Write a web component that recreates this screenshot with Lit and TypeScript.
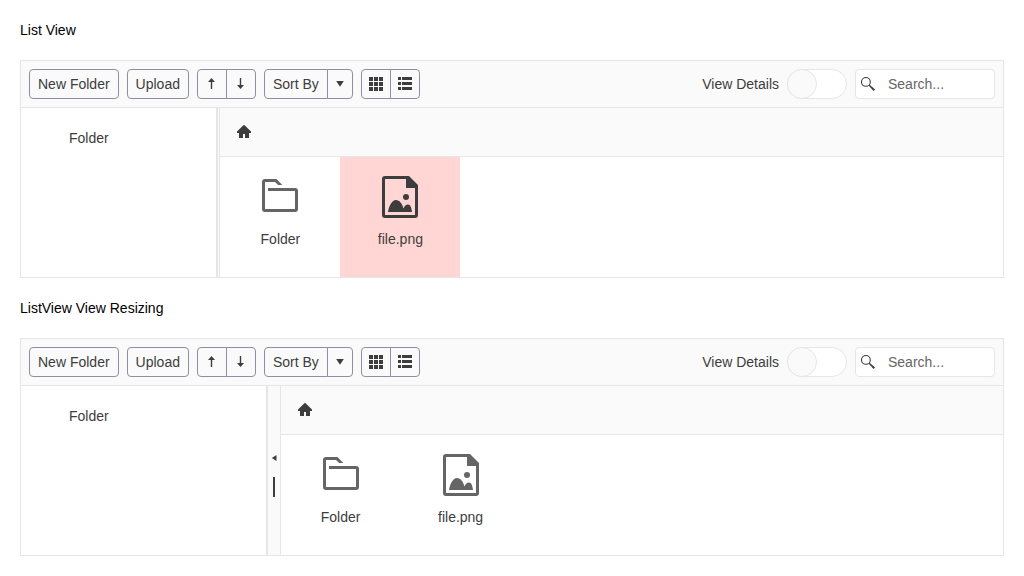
import { LitElement, html, svg, css } from "lit";
import { customElement, property } from "lit/decorators.js";
import { classMap } from "lit/directives/class-map.js";

const glyphs = {
  up: svg`<path d="M7.500 2 11 6H8.200v7H6.800V6H4Z"/>`,
  down: svg`<path d="M7.500 13 4 9h2.800V2h1.400v7H11Z"/>`,
  caret: svg`<path d="M4.200 5h7.600L8 10.800Z"/>`,
  grid: svg`<path d="M1 1h4v4H1zM6 1h4v4H6zM11 1h4v4h-4zM1 6h4v4H1zM6 6h4v4H6zM11 6h4v4h-4zM1 11h4v4H1zM6 11h4v4H6zM11 11h4v4h-4z"/>`,
  list: svg`<path d="M1 1h3v3H1zM5 1h10v3H5zM1 6h3v3H1zM5 6h10v3H5zM1 11h3v3H1zM5 11h10v3H5z"/>`,
  search: svg`<circle cx="5.900" cy="5.900" r="4.400" fill="none" stroke="currentColor" stroke-width="1.100"/><path d="m8.800 9.500.7-.7 1 .7 4.600 4-1.600 1.600-4-4.600Z"/>`,
  home: svg`<path d="M7.400 1.300a.9.9 0 0 1 1.200 0L15 7.600V9h-2v4.500a.5.5 0 0 1-.5.5H9v-4H7v4H3.500a.5.5 0 0 1-.5-.5V9H1V7.600Z"/>`,
};
type Glyph = keyof typeof glyphs;
const icon = (name: Glyph) => html`<svg class="icon" viewBox="0 0 16 16" fill="currentColor">${glyphs[name]}</svg>`;

const folderArt = html`<svg class="art" viewBox="0 0 48 48" fill="none" stroke="currentColor" stroke-width="3">
  <path d="M12 16.5H39a1.5 1.5 0 0 1 1.5 1.5v18a1.5 1.5 0 0 1-1.5 1.5H9A1.5 1.5 0 0 1 7.5 36V9A1.5 1.5 0 0 1 9 7.5h10.200"/>
  <path fill="currentColor" stroke="none" d="M19 6h1.400l6 6h-4.200L19 9Z"/>
</svg>`;
const imageArt = html`<svg class="art" viewBox="0 0 48 48" fill="currentColor">
  <path fill-rule="evenodd" d="M9 3h24l9 9v30a3 3 0 0 1-3 3H9a3 3 0 0 1-3-3V6a3 3 0 0 1 3-3Zm0 3v36h30V15h-9V6Z"/>
  <circle cx="30" cy="24" r="3"/>
  <path d="M12 39c1-6 4-12 8-12 3.500 0 6 3.500 7.500 8.500C28.500 33 30 31.500 32 31.500c2.500 0 3.500 3.500 4 7.500Z"/>
</svg>`;

@customElement("file-manager")
export class FileManager extends LitElement {
  @property({ type: Boolean }) resizable = false;
  @property() selected = "";

  static styles = css`
    :host { display: block; color: #3d3d3d; }
    .panel { border: 1px solid #e6e6e6; background: #fff; }
    .toolbar { display: flex; align-items: center; gap: 8px; padding: 8px; background: #fafafa; border-bottom: 1px solid #e6e6e6; }
    .group { display: flex; }
    .button { box-sizing: border-box; height: 30px; border: 1px solid #8f8fa1; border-radius: 4px; padding: 0 8px; background: #fafafa; color: inherit; font: inherit; white-space: nowrap; display: flex; align-items: center; }
    .square { padding: 0 6px; }
    .narrow { padding: 0 4px; }
    .group .button:not(:last-child) { border-top-right-radius: 0; border-bottom-right-radius: 0; }
    .group .button + .button { margin-left: -1px; border-top-left-radius: 0; border-bottom-left-radius: 0; }
    .icon { display: block; width: 16px; height: 16px; flex: none; }
    .spacer { flex: 1; }
    .details { display: flex; align-items: center; gap: 8px; }
    .switch { box-sizing: border-box; width: 60px; height: 30px; border-radius: 15px; border: 1px solid #e6e6e6; background: #fff; display: flex; }
    .thumb { box-sizing: border-box; width: 30px; height: 30px; margin: -1px; border: 1px solid #e6e6e6; border-radius: 50%; background: #fafafa; }
    .search { box-sizing: border-box; width: 140px; height: 30px; border: 1px solid #e6e6e6; border-radius: 4px; background: #fff; display: flex; align-items: center; gap: 12px; padding: 0 4px; }
    .placeholder { color: #666; }
    .body { display: flex; height: 169px; }
    .tree { box-sizing: border-box; flex: none; width: 195.4px; padding: 20px 0 0 48px; }
    .resizable .tree { width: 244.6px; }
    .splitter { box-sizing: border-box; flex: none; width: 4px; border: solid #e6e6e6; border-width: 0 1px 0 2px; background: #fafafa; display: flex; flex-direction: column; align-items: center; justify-content: center; gap: 16px; }
    .resizable .splitter { width: 15px; }
    .collapse { width: 6px; height: 6px; display: block; margin-top: 11px; }
    .handle { width: 2px; height: 20px; background: #3d3d3d; }
    .content { flex: 1; min-width: 0; }
    .crumbs { box-sizing: border-box; height: 49px; padding: 16px; background: #fafafa; border-bottom: 1px solid #e6e6e6; }
    .files { display: flex; }
    .tile { box-sizing: border-box; width: 120px; height: 120px; padding-top: 16px; display: flex; flex-direction: column; align-items: center; gap: 8px; }
    .selected { background: #ffd6d3; }
    .art { width: 48px; height: 48px; color: #656565; }
    .selected .art { color: #3d3d3d; }
  `;

  private tile(name: string, art: unknown) {
    return html`<div class=${classMap({ tile: true, selected: this.selected === name })}>${art}<span>${name}</span></div>`;
  }

  render() {
    return html`<div class=${classMap({ panel: true, resizable: this.resizable })}>
      <div class="toolbar">
        <button class="button">New Folder</button>
        <button class="button">Upload</button>
        <div class="group">
          <button class="button square">${icon("up")}</button>
          <button class="button square">${icon("down")}</button>
        </div>
        <div class="group">
          <button class="button">Sort By</button>
          <button class="button narrow">${icon("caret")}</button>
        </div>
        <div class="group">
          <button class="button square">${icon("grid")}</button>
          <button class="button square">${icon("list")}</button>
        </div>
        <div class="spacer"></div>
        <div class="details"><span>View Details</span><div class="switch"><div class="thumb"></div></div></div>
        <div class="search">${icon("search")}<span class="placeholder">Search...</span></div>
      </div>
      <div class="body">
        <div class="tree">Folder</div>
        <div class="splitter">
          ${this.resizable
            ? html`<svg class="collapse" viewBox="0 0 6 6" fill="#3d3d3d"><path d="M5.500 0v6L.8 3Z"/></svg><div class="handle"></div>`
            : null}
        </div>
        <div class="content">
          <div class="crumbs">${icon("home")}</div>
          <div class="files">${this.tile("Folder", folderArt)}${this.tile("file.png", imageArt)}</div>
        </div>
      </div>
    </div>`;
  }
}

@customElement("app-root")
export class AppRoot extends LitElement {
  static styles = css`
    :host { display: block; box-sizing: border-box; height: 576px; padding: 20px; background: #fff; color: #000; font: 14px/20px "Liberation Sans", Arial, sans-serif; }
    .title { margin-bottom: 20px; }
    .second { margin-top: 20px; }
  `;

  render() {
    return html`
      <div class="title">List View</div>
      <file-manager selected="file.png"></file-manager>
      <div class="title second">ListView View Resizing</div>
      <file-manager resizable></file-manager>
    `;
  }
}
